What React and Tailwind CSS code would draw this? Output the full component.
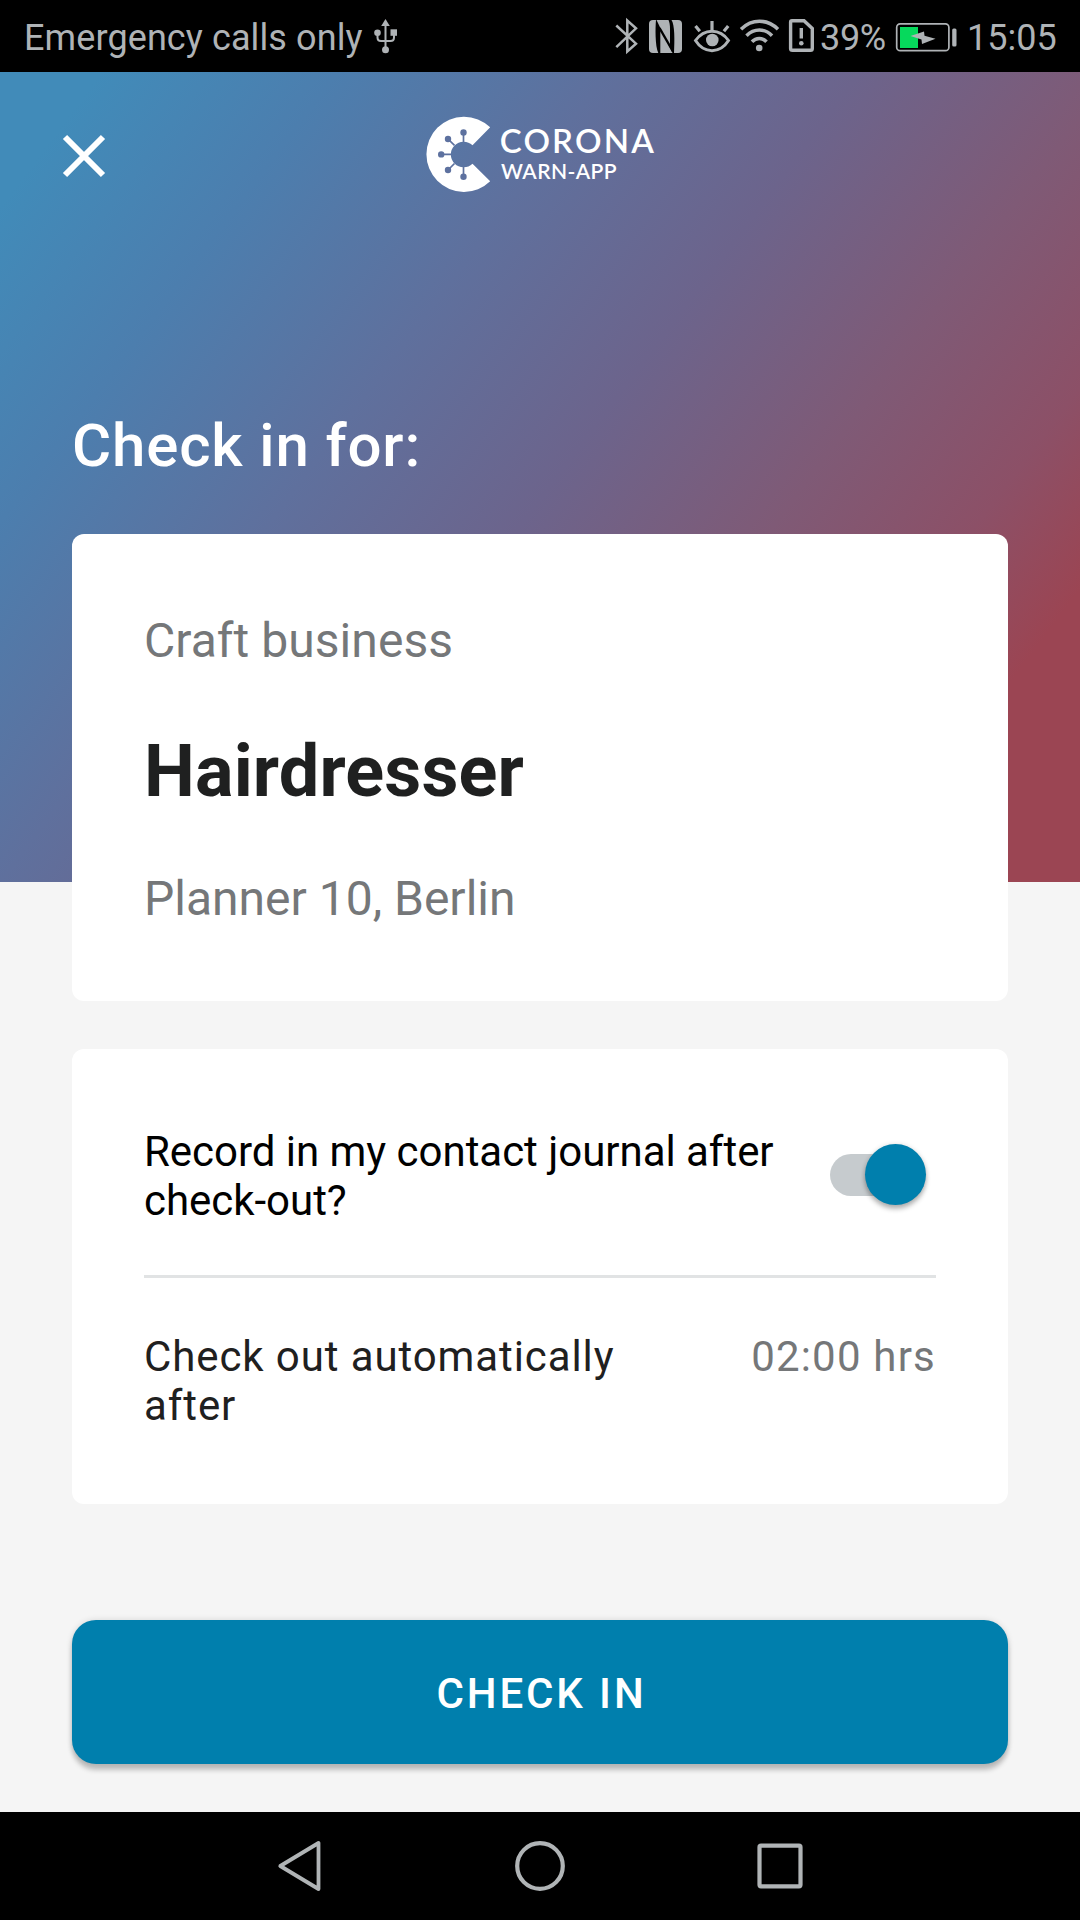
import React from "react";

const INK = "#afb3b6";

function UsbIcon() {
  return (
    <svg className="ml-[9px] h-[72px] w-[28px] shrink-0" viewBox="372 0 28 72" fill="none" stroke={INK} strokeWidth="2">
      <path d="M385.5 24V49M377.5 33v4.5q0 3.5 3.5 3.5h9.5q3.5 0 3.5-3.5V34" />
      <path d="M381.2 26h8.6L385.5 19z" fill={INK} stroke="none" />
      <circle cx="385.5" cy="49.7" r="3.5" fill={INK} stroke="none" />
      <circle cx="377.5" cy="32.7" r="3.3" fill={INK} stroke="none" />
      <path d="M390.5 29.3h6.500v6.500h-6.500z" fill={INK} stroke="none" />
    </svg>
  );
}

function BluetoothIcon() {
  return (
    <svg className="h-[72px] w-[33px] shrink-0" viewBox="610 0 33 72" fill="none" stroke={INK} strokeWidth="2.5">
      <path d="M616.3 25.5L636 43.7L627.3 51.5V20.5L636 28.3L616.3 47.2" />
    </svg>
  );
}

function NfcIcon() {
  return (
    <svg className="h-[72px] w-[45px] shrink-0" viewBox="643 0 45 72">
      <rect x="649" y="20" width="33" height="33" rx="4" fill={INK} />
      <path d="M656 20C655.300 27 655 46 658.300 53H660.300V30.500L670 45V29C670 25 669.500 22 668.500 20H671.500C674.800 25 674.700 40 674 53H672.500L656.500 20z" fill="#000" />
      <path d="M659.500 28L673 51.500" stroke="#000" strokeWidth="2.400" />
    </svg>
  );
}

function EyeIcon() {
  return (
    <svg className="h-[72px] w-[48px] shrink-0" viewBox="688 0 48 72" fill="none" stroke={INK} strokeWidth="3.2">
      <path d="M695.5 40.5C704 28 720 28 728.5 40.5C720 54 704 54 695.5 40.5z" strokeWidth="3" />
      <path d="M712 21v9M695.5 26l4.3 5.3M728.2 26l-4.3 5.3" />
      <circle cx="712.3" cy="40" r="6.3" fill={INK} stroke="none" />
    </svg>
  );
}

function WifiIcon() {
  return (
    <svg className="h-[72px] w-[48px] shrink-0" viewBox="736 0 48 72" fill="none" stroke={INK} strokeWidth="3.5">
      <path d="M741 29.2C752 18.6 767 18.6 778 29.2M746.5 35.7C754 28.2 765 28.2 772 35.7M752 41.7C756 37.3 762.500 37.3 766.5 41.7" />
      <circle cx="759.2" cy="48" r="3.3" fill={INK} stroke="none" />
    </svg>
  );
}

function SimIcon() {
  return (
    <svg className="h-[72px] w-[36px] shrink-0" viewBox="784 0 36 72" fill="none" stroke={INK} strokeWidth="3.4">
      <path d="M792 20.7H804L812.3 28.5V48.5Q812.3 50.3 810.5 50.3H792.500Q790.600 50.300 790.600 48.500V22.300Q790.600 20.700 792 20.700z" />
      <path d="M801.3 28v10.5" strokeWidth="3.4" />
      <circle cx="801.3" cy="43.3" r="2.3" fill={INK} stroke="none" />
    </svg>
  );
}

function BatteryIcon() {
  return (
    <svg className="h-[72px] w-[66px] shrink-0" viewBox="893 0 66 72">
      <rect x="896.7" y="23.9" width="52.2" height="26.8" rx="3.5" fill="none" stroke={INK} strokeWidth="1.7" />
      <rect x="900" y="27" width="18" height="21" fill="#06d95c" />
      <path d="M910.5 36L924 31.5L924.5 35.7L935.5 38.8L922 44L921.5 39.5z" fill={INK} />
      <rect x="952.2" y="28.5" width="4.3" height="18" rx="1.5" fill={INK} />
    </svg>
  );
}

function StatusBar() {
  return (
    <div className="flex h-[72px] items-center justify-between bg-black text-[36px] leading-[42px] text-[#afb3b6]">
      <div className="flex items-center pl-[24px]">
        <span className="w-[339px] whitespace-nowrap pt-[3px] tracking-[0.1px]">Emergency calls only</span>
        <UsbIcon />
      </div>
      <div className="flex w-[470px] items-center">
        <BluetoothIcon />
        <NfcIcon />
        <EyeIcon />
        <WifiIcon />
        <SimIcon />
        <span className="w-[73px] pt-[3px] tracking-[-0.3px]">39%</span>
        <BatteryIcon />
        <span className="ml-[8px] pt-[3px]">15:05</span>
      </div>
    </div>
  );
}

function Logo() {
  return (
    <svg className="h-[90px] w-[240px]" viewBox="420 110 240 90">
      <path
        d="M490.200 127.300A37.600 37.600 0 1 0 490.200 181.300L472.500 163.700A12.800 12.800 0 1 1 472.500 145.200z"
        fill="#fff"
      />
      <g stroke="#5d719f" strokeWidth="1.7" fill="#5d719f">
        <path d="M463.5 142V132M454.5 145.3L448 139M451 154.4H441M454.5 163.5L448 170M463.5 167V177" />
        <g stroke="none">
          <circle cx="463.5" cy="132.5" r="3.2" />
          <circle cx="448" cy="139" r="3.2" />
          <circle cx="441.2" cy="154.4" r="3.2" />
          <circle cx="448" cy="170" r="3.2" />
          <circle cx="463.5" cy="176.7" r="3.2" />
        </g>
      </g>
      <g fill="#fff" fontFamily="Lato, sans-serif">
        <text x="499.800" y="152.500" fontSize="33" fontWeight="600" textLength="154" lengthAdjust="spacing">CORONA</text>
        <text x="501" y="178.700" fontSize="21" fontWeight="600" textLength="115.500" lengthAdjust="spacing">WARN-APP</text>
      </g>
    </svg>
  );
}

function Header() {
  return (
    <header className="h-[810px] bg-[linear-gradient(126.87deg,#418bb9_0%,#418bb9_6%,#4c7eae_20%,#5f709d_36%,#6c648c_51%,#7f5a76_66%,#8c5067_78%,#9b4553_87%,#9b4553_100%)] pt-[38px]">
      <div className="grid h-[90px] grid-cols-[360px_360px_360px] items-center">
        <button aria-label="Close" className="ml-[60px] w-[48px]">
          <svg className="h-[48px] w-[48px]" viewBox="0 0 48 48" fill="none" stroke="#fff" strokeWidth="6">
            <path d="M5 6l38 38M43 6L5 44" />
          </svg>
        </button>
        <div className="flex justify-center">
          <Logo />
        </div>
      </div>
      <h1 className="mt-[211px] px-[72px] text-[60px] leading-[70px] font-medium tracking-[0.85px] text-white">Check in for:</h1>
    </header>
  );
}

function Toggle() {
  return (
    <div className="mt-[17px] mr-[10px] flex h-[61px] w-[96px] shrink-0 items-center">
      <div className="flex h-[42px] w-[90px] items-center rounded-full bg-[#c6cbce] pl-[35px]">
        <div className="h-[61px] w-[61px] shrink-0 rounded-full bg-[#007fad] shadow-[0_4px_5px_rgba(0,0,0,0.28),0_0_5px_rgba(0,0,0,0.12)]" />
      </div>
    </div>
  );
}

function NavBar() {
  return (
    <nav className="flex h-[108px] items-center justify-center gap-[180px] bg-black">
      <svg className="h-[60px] w-[60px]" viewBox="270 1836 60 60" fill="none" stroke="#b0b4b6" strokeWidth="3.8" strokeLinejoin="round">
        <path d="M280.3 1866L318.5 1843V1889z" />
      </svg>
      <svg className="h-[60px] w-[60px]" viewBox="510 1836 60 60" fill="none" stroke="#b0b4b6" strokeWidth="4.2">
        <circle cx="540" cy="1866" r="22.8" />
      </svg>
      <svg className="h-[60px] w-[60px]" viewBox="750 1836 60 60" fill="none" stroke="#b0b4b6" strokeWidth="4.2">
        <rect x="759.5" y="1845.7" width="41" height="40.6" rx="1.5" />
      </svg>
    </nav>
  );
}

export default function App() {
  return (
    <div className="flex h-[1920px] w-[1080px] flex-col overflow-hidden bg-[#f5f5f5] font-[Roboto,sans-serif]">
      <StatusBar />
      <Header />
      <main className="relative -mt-[348px] flex grow flex-col px-[72px]">
        <section className="h-[467px] rounded-[12px] bg-white px-[72px] pt-[79px]">
          <p className="text-[48px] leading-[56px] tracking-[0.05px] text-[#757779]">Craft business</p>
          <h2 className="mt-[61px] text-[72px] leading-[84px] font-bold tracking-[0.15px] text-[#1f2020]">Hairdresser</h2>
          <p className="mt-[57px] text-[48px] leading-[56px] text-[#757779]">Planner 10, Berlin</p>
        </section>
        <section className="mt-[48px] h-[455px] rounded-[12px] bg-white px-[72px] pt-[78px]">
          <div className="flex h-[148px] items-start justify-between">
            <p className="w-[650px] text-[42px] leading-[49px] tracking-[-0.03px] text-black">Record in my contact journal after check-out?</p>
            <Toggle />
          </div>
          <div className="h-[3px] bg-[#e1e3e4]" />
          <div className="flex justify-between pt-[54px] text-[42px] leading-[49px]">
            <p className="w-[500px] tracking-[0.9px] text-[#1f2020]">Check out automatically after</p>
            <p className="tracking-[1.2px] text-[#757779]">02:00 hrs</p>
          </div>
        </section>
        <button className="mt-[116px] h-[144px] rounded-[24px] bg-[#007fad] pt-[3px] pl-[3px] text-[42px] leading-[50px] font-medium tracking-[2.9px] text-white shadow-[0_6px_5px_rgba(0,0,0,0.22),0_0_6px_rgba(0,0,0,0.12)]">
          CHECK IN
        </button>
      </main>
      <NavBar />
    </div>
  );
}
